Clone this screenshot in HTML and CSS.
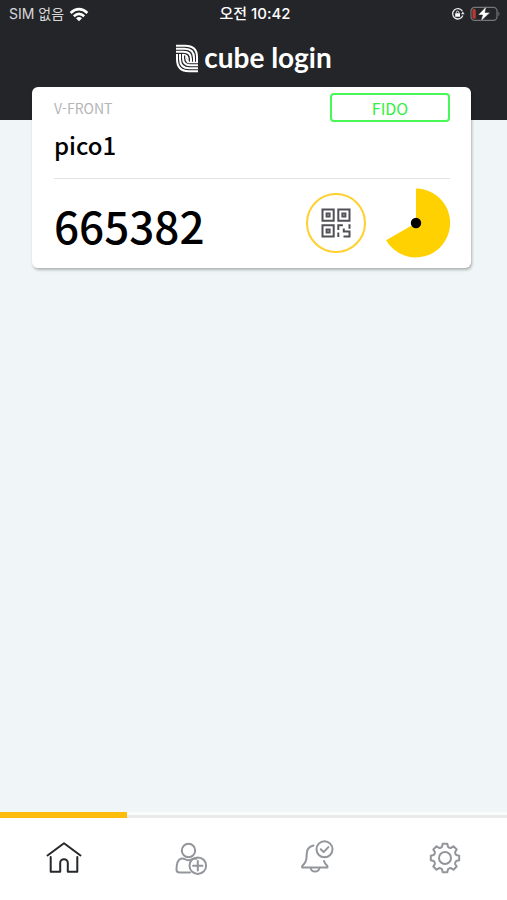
FILE: index.html
```html
<!DOCTYPE html>
<html lang="ko">
<head>
<meta charset="utf-8">
<meta name="viewport" content="width=device-width, initial-scale=1">
<title>cube login</title>
<link rel="stylesheet" href="styles.css">
</head>
<body>
<header class="top">
  <div class="status">
    <div class="carrier">
      <span>SIM 없음</span>
      <svg width="20" height="15" viewBox="0 0 20 15" fill="none" stroke="#fff" stroke-width="2.6">
        <path d="M1.6 6Q10-1.6 18.4 6M4.8 9.2Q10 4.4 15.2 9.2"/>
        <path d="M7 11.2Q10 8.8 13 11.2L10 14.2Z" fill="#fff" stroke="none"/>
      </svg>
    </div>
    <span class="time">오전 10:42</span>
    <div class="indicators">
      <svg width="14" height="14" viewBox="0 0 14 14" fill="none" stroke="#e8e8e8" stroke-width="1.3">
        <path d="M11.8 8.5A5.2 5.2 0 1 1 11.4 4.2"/>
        <path d="M10 7.2h3.6l-1.8-2.6z" fill="#e8e8e8" stroke="none"/>
        <rect x="4.2" y="6.2" width="4.8" height="3.6" rx=".4" fill="#fff" stroke="none"/>
        <path d="M5.3 6.6V5.4a1.3 1.3 0 0 1 2.6 0v1.2" stroke-width="1"/>
      </svg>
      <svg width="31" height="16" viewBox="0 0 31 16">
        <rect x="1" y="1.4" width="26" height="13" rx="3.6" fill="none" stroke="#77777a" stroke-width="1.2"/>
        <path d="M28.4 5.5q2.2 2.4 0 4.8z" fill="#77777a"/>
        <rect x="2.4" y="3" width="3.4" height="9.8" rx="1.4" fill="#b53a34"/>
        <path d="M16.600 0 8 9h4.600l-2 6.600 9.600-9.200h-5.200z" fill="#fff" stroke="#242529" stroke-width=".5"/>
      </svg>
    </div>
  </div>
  <h1 class="brand">
    <svg width="24" height="29" viewBox="0 0 24 29" fill="none" stroke="#fff" stroke-width="2">
      <path d="M1 1.700H10Q22 1.700 22 13V18"/>
      <path d="M1 4.700H9.500Q19 4.700 19 14V18"/>
      <path d="M1 7.700H8.500Q16 7.700 16 15V18"/>
      <path d="M2 10V15Q2 27.300 14 27.300H23"/>
      <path d="M5 10V15Q5 24.300 14.500 24.300H23"/>
      <path d="M8 10V14Q8 21.300 15.500 21.300H23"/>
      <path d="M8 10.500Q13 10.500 13 16V18.500H23M11 12V14Q11 18.500 15.500 18.500" stroke-width="1.500"/>
    </svg>
    <span>cube login</span>
  </h1>
</header>

<main class="content">
  <article class="card">
    <div class="card-head">
      <span class="service">V-FRONT</span>
      <button class="fido" type="button">FIDO</button>
    </div>
    <h2 class="account">pico1</h2>
    <div class="card-code">
      <output class="code">665382</output>
      <button class="qr" type="button" aria-label="QR">
        <svg width="30" height="30" viewBox="0 0 30 30" fill="none" stroke="#505057" stroke-width="2">
          <path d="M1.5 1.5h11.2v11.2H1.5zM17.3 1.5h11.2v11.2H17.3zM1.5 17.3h11.2v11.2H1.5z"/>
          <path d="M5.6 5.6h3v3h-3zM21.4 5.6h3v3h-3zM5.6 21.400h3v3h-3z"/>
          <path d="M17.3 22v-4.700h4.600M17.3 24.500v4.500M22.800 20.500v3h5.700v5h-6M28.500 16.300v4.500"/>
        </svg>
      </button>
      <svg class="timer" width="70" height="70" viewBox="-36 -35 70 70" role="img" aria-label="timer">
        <path d="M0 0V-34.500A34.300 34.500 0 1 1-29.900 17.200Z" fill="#ffd100"/>
        <circle r="5.200" fill="#000"/>
      </svg>
    </div>
  </article>
</main>

<nav class="tabs">
  <a class="tab active" href="#home" aria-label="Home">
    <svg width="36" height="36" viewBox="0 0 36 36">
      <path d="M1.5 15.5 18 3.2l16.5 12.3M4.7 17v14.7h9.500V23a3.800 3.800 0 0 1 7.600 0v8.700h9.500V17"/>
    </svg>
  </a>
  <a class="tab" href="#add" aria-label="Add account">
    <svg width="36" height="36" viewBox="0 0 36 36">
      <circle cx="15.5" cy="10.5" r="6.7"/>
      <path d="M17 32.500H6.500q-3 0-3-3c0-5.500 1.300-9.500 4.300-10.800q2-.8 3.900.5 3.800 2 7.600 0 2-1.300 4.100-.4"/>
      <circle cx="24.800" cy="25.700" r="8.300"/>
      <path d="M24.800 21v9.400M20.100 25.700h9.400"/>
    </svg>
  </a>
  <a class="tab" href="#alerts" aria-label="Notifications">
    <svg width="36" height="36" viewBox="0 0 36 36">
      <path d="M13.500 5.500C9 6.500 6.700 9.500 6.700 14c0 6-.7 8.500-4.500 12v1.600h25.200V26q-2.600-2.200-3.400-5"/>
      <path d="M10.800 28c.5 4.800 8 4.800 8.500 0"/>
      <circle cx="24.500" cy="9.300" r="8"/>
      <path d="m20.800 9.300 2.800 2.800 4.800-5"/>
    </svg>
  </a>
  <a class="tab" href="#settings" aria-label="Settings">
    <svg width="36" height="36" viewBox="-18 -18 36 36">
      <path d="M-2.300-14.200H2.300L3-11.300Q4.500-9.800 5.900-10.100L8.500-11.700 11.700-8.500 10.100-5.900Q9.800-4.500 11.300-3L14.200-2.300V2.300L11.300 3Q9.800 4.500 10.100 5.900L11.700 8.500 8.500 11.700 5.900 10.100Q4.500 9.800 3 11.300L2.300 14.200H-2.300L-3 11.300Q-4.500 9.800-5.900 10.100L-8.500 11.700-11.700 8.500-10.100 5.900Q-9.800 4.500-11.300 3L-14.200 2.300V-2.300L-11.300-3Q-9.800-4.500-10.100-5.900L-11.700-8.500-8.500-11.700-5.900-10.100Q-4.500-9.800-3-11.300Z"/>
      <circle r="6"/>
    </svg>
  </a>
</nav>
</body>
</html>
```

FILE: styles.css
```css
* {
  box-sizing: border-box;
}

body {
  margin: 0;
  min-height: 100vh;
  display: flex;
  flex-direction: column;
  background: #f0f6f7;
  color: #000;
  font-family: "Noto Sans CJK KR", sans-serif;
}

svg {
  display: block;
  flex: none;
}

button {
  padding: 0;
  background: none;
  font: inherit;
}

.top {
  height: 120px;
  background: #242529;
  color: #fff;
}

.status {
  display: grid;
  grid-template-columns: 1fr auto 1fr;
  align-items: center;
  height: 28px;
  padding: 0 6px 0 9px;
  font: 14px/20px Inter, "Noto Sans CJK KR", sans-serif;
}

.carrier,
.indicators {
  display: flex;
  align-items: center;
  gap: 5px;
  color: #d8d8da;
}

.indicators {
  justify-content: flex-end;
}

.time {
  font-size: 15px;
  font-weight: 500;
}

.brand {
  display: flex;
  justify-content: center;
  align-items: center;
  gap: 5px;
  height: 32px;
  margin: 14px 0 0;
  font: 700 28px/32px Lato, sans-serif;
}

.brand span {
  padding-bottom: 3px;
}

.content {
  flex: 1;
  padding: 0 36px 0 32px;
}

.card {
  position: relative;
  margin-top: -33px;
  padding: 6px 21px 10px 22px;
  border-radius: 6px;
  background: #fff;
  box-shadow: 1px 2px 3px rgba(0, 0, 0, 0.28);
}

.card-head {
  display: flex;
  justify-content: space-between;
  align-items: center;
}

.service {
  color: #b5b5b7;
  font-size: 14px;
  line-height: 24px;
}

.fido {
  width: 120px;
  height: 29px;
  border: 2px solid #48f856;
  border-radius: 4px;
  color: #30f040;
  font-size: 16px;
  line-height: 24px;
}

.account {
  margin: 5px 0 0;
  padding-bottom: 15px;
  border-bottom: 1px solid #e2e2e2;
  font-size: 24px;
  font-weight: 500;
  line-height: 36px;
}

.card-code {
  display: flex;
  align-items: center;
  padding-top: 9px;
}

.code {
  flex: 1;
  padding-top: 4px;
  font-size: 44px;
  font-weight: 500;
  line-height: 64px;
}

.qr {
  display: grid;
  place-items: center;
  width: 60px;
  height: 60px;
  margin-right: 14px;
  border: 2px solid #ffd02e;
  border-radius: 50%;
}

.tabs {
  display: grid;
  grid-template-columns: repeat(4, 1fr);
  background: #fff;
}

.tab {
  display: flex;
  justify-content: center;
  height: 88px;
  padding: 25px 0 0 2px;
  border-top: 3px solid #fafbfb;
  box-shadow: inset 0 3px #e9eaea;
}

.tab svg {
  fill: none;
  stroke: #92959a;
  stroke-width: 2px;
  stroke-linecap: round;
  stroke-linejoin: round;
}

.tab.active {
  border-color: #fdbb0b;
  box-shadow: inset 0 3px #fdbb0b;
}

.tab.active svg {
  stroke: #26272a;
}
```
